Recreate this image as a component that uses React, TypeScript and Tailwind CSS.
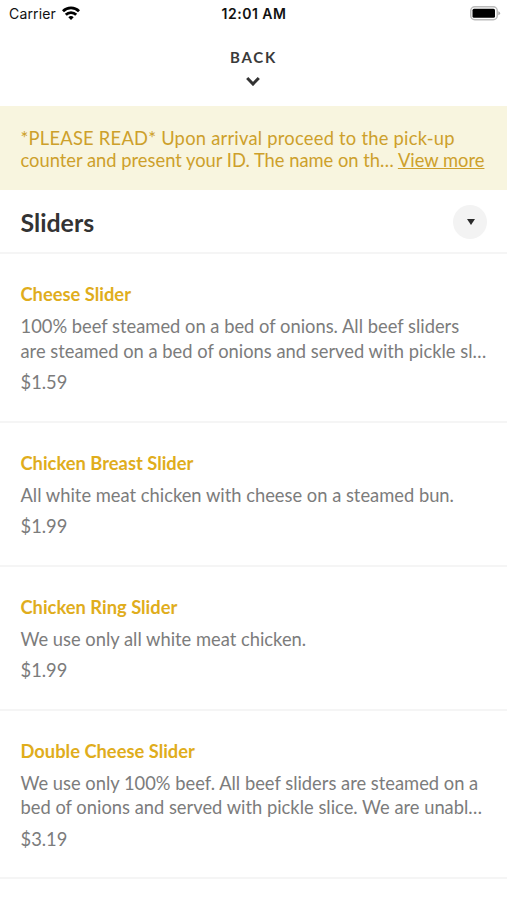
const items = [
  {
    name: "Cheese Slider",
    lines: ["100% beef steamed on a bed of onions. All beef sliders", "are steamed on a bed of onions and served with pickle sl…"],
    price: "$1.59",
  },
  {
    name: "Chicken Breast Slider",
    lines: ["All white meat chicken with cheese on a steamed bun."],
    price: "$1.99",
  },
  {
    name: "Chicken Ring Slider",
    lines: ["We use only all white meat chicken."],
    price: "$1.99",
  },
  {
    name: "Double Cheese Slider",
    lines: ["We use only 100% beef. All beef sliders are steamed on a", "bed of onions and served with pickle slice. We are unabl…"],
    price: "$3.19",
  },
];

function StatusBar() {
  return (
    <div className="grid h-7 grid-cols-3 items-center pr-2 pl-[9px] font-['Inter',sans-serif] text-sm text-[#111]">
      <div className="flex items-center gap-1.5">
        <span className="tracking-[0.15px]">Carrier</span>
        <svg viewBox="0 0 18 14" className="-mt-0.5 h-3.5 w-[18px]" fill="none" stroke="#000" strokeWidth="2.8">
          <path d="M1 5.2a11.3 11.3 0 0 1 16 0" />
          <path d="M3.8 8.8a7.3 7.3 0 0 1 10.4 0" />
          <path d="M9 14 6.3 11.3a3.9 3.9 0 0 1 5.4 0z" fill="#000" stroke="none" />
        </svg>
      </div>
      <span className="text-center font-semibold tracking-[0.5px]">12:01 AM</span>
      <svg viewBox="0 0 31 15" className="-mt-0.5 -mr-0.5 h-[15px] w-[31px] justify-self-end" fill="none">
        <rect x="0.75" y="0.75" width="26.5" height="13" rx="4" stroke="#bbb" strokeWidth="1.5" />
        <rect x="2.5" y="2.8" width="22.5" height="9" rx="1.5" fill="#000" />
        <path d="M28.3 5.2q1.8.6 1.8 2t-1.8 2z" fill="#aaa" />
      </svg>
    </div>
  );
}

export default function App() {
  return (
    <div className="h-[900px] w-[507px] overflow-hidden bg-white font-['Lato',sans-serif] text-[#7c7c7c]">
      <StatusBar />
      <button className="flex h-[78px] w-full flex-col items-center pt-[19px] text-[#3a3a3a]">
        <span className="text-[15px] leading-5 font-bold tracking-[1.8px]">BACK</span>
        <svg viewBox="0 0 14 10" className="mt-[9px] mr-0.5 h-2.5 w-3.5" fill="none" stroke="#333" strokeWidth="3">
          <path d="M1.2 2 7 8l5.8-6" />
        </svg>
      </button>
      <div className="h-[84px] bg-[#f8f5df] px-[20.5px] pt-[21px] text-[18.34px] leading-[22px] whitespace-nowrap text-[#cda02b]">
        <p className="tracking-[0.24px]">*PLEASE READ* Upon arrival proceed to the pick-up</p>
        <p>
          counter and present your ID. The name on th… <a className="underline">View more</a>
        </p>
      </div>
      <div className="flex h-16 items-center justify-between border-b-2 border-[#f5f5f5] px-5">
        <h1 className="mt-1 ml-[0.5px] text-[24.9px] font-bold text-[#333]">Sliders</h1>
        <button className="mt-0.5 flex size-[34px] items-center justify-center rounded-full bg-[#f3f3f3]">
          <svg viewBox="0 0 8 6" className="ml-0.5 h-1.5 w-2" fill="#2b2b2b">
            <path d="M0 0h8L4 6z" />
          </svg>
        </button>
      </div>
      {items.map((item) => (
        <article
          key={item.name}
          className="border-b-2 border-[#f5f5f5] px-[20.5px] pt-[26.25px] pb-[24.25px] text-[18.34px] whitespace-nowrap"
        >
          <h2 className="leading-7 font-bold text-[#e0ad1c]">{item.name}</h2>
          <div className="mt-[6px] leading-[24.5px]">
            {item.lines.map((line) => (
              <p key={line}>{line}</p>
            ))}
          </div>
          <p className="mt-[5px] leading-7">{item.price}</p>
        </article>
      ))}
    </div>
  );
}
